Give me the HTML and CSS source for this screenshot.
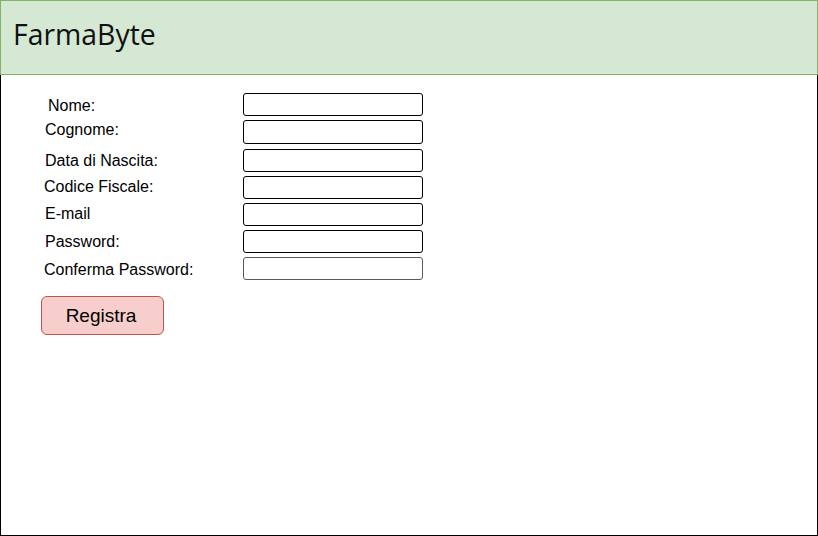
FILE: index.html
```html
<!DOCTYPE html>
<html lang="it">
<head>
<meta charset="utf-8">
<title>FarmaByte</title>
<link rel="stylesheet" href="styles.css">
</head>
<body>
<div class="frame">
  <header class="header"><span class="brand">FarmaByte</span></header>
  <main class="content">
    <form class="form">
      <div class="row r1"><label class="lbl l48 dn1">Nome:</label><input class="field" type="text"></div>
      <div class="row r2"><label class="lbl l45 up2">Cognome:</label><input class="field" type="text"></div>
      <div class="row r3"><label class="lbl l45">Data di Nascita:</label><input class="field" type="text"></div>
      <div class="row r4"><label class="lbl l44 up1">Codice Fiscale:</label><input class="field" type="text"></div>
      <div class="row r5"><label class="lbl l45 up1">E-mail</label><input class="field" type="text"></div>
      <div class="row r6"><label class="lbl l45">Password:</label><input class="field" type="password"></div>
      <div class="row r7"><label class="lbl l44 dn1">Conferma Password:</label><input class="field field-soft" type="password"></div>
      <button class="btn" type="button">Registra</button>
    </form>
  </main>
</div>
</body>
</html>
```
FILE: styles.css
```css
* { box-sizing: border-box; }
html, body { margin: 0; padding: 0; background: #fff; }
body { font-family: "Liberation Sans", Arial, sans-serif; color: #000; }
.frame {
  width: 818px;
  height: 536px;
  border: 1px solid #000;
  border-top: none;
  display: flex;
  flex-direction: column;
}
.header {
  height: 75px;
  margin: 0 -1px;
  background: #d5e8d4;
  border: 1px solid #82b366;
  display: flex;
  align-items: center;
  padding-left: 12px;
  padding-bottom: 8px;
}
.brand {
  font-family: "Open Sans", sans-serif;
  font-size: 28.4px;
  color: #111;
}
.content { flex: 1; padding: 18px 0 0 0; }
.form { display: flex; flex-direction: column; }
.row {
  display: grid;
  grid-template-columns: 242px 180px;
  align-items: center;
  height: 23px;
}
.r2, .r3, .r4, .r5, .r6, .r7 { margin-top: 4px; }
.r2 { height: 24px; }
.r3 { margin-top: 5px; }
.lbl { font-size: 16px; line-height: 18px; position: relative; }
.l48 { padding-left: 47px; }
.l45 { padding-left: 44px; }
.l44 { padding-left: 43px; }
.up2 { top: -2px; }
.up1 { top: -1px; }
.dn1 { top: 1px; }
.field {
  width: 180px;
  height: 100%;
  border: 1.3px solid #000;
  border-radius: 3px;
  background: #fff;
  padding: 0;
  margin: 0;
}
.field-soft { border-color: #5a5a5a; }
.btn {
  margin: 16px 0 0 40px;
  width: 123px;
  height: 39px;
  background: #f8cecc;
  border: 1px solid #b85450;
  border-radius: 6px;
  font-family: "Liberation Sans", Arial, sans-serif;
  font-size: 19px;
  color: #000;
  padding: 0 3px 0 0;
}
```
